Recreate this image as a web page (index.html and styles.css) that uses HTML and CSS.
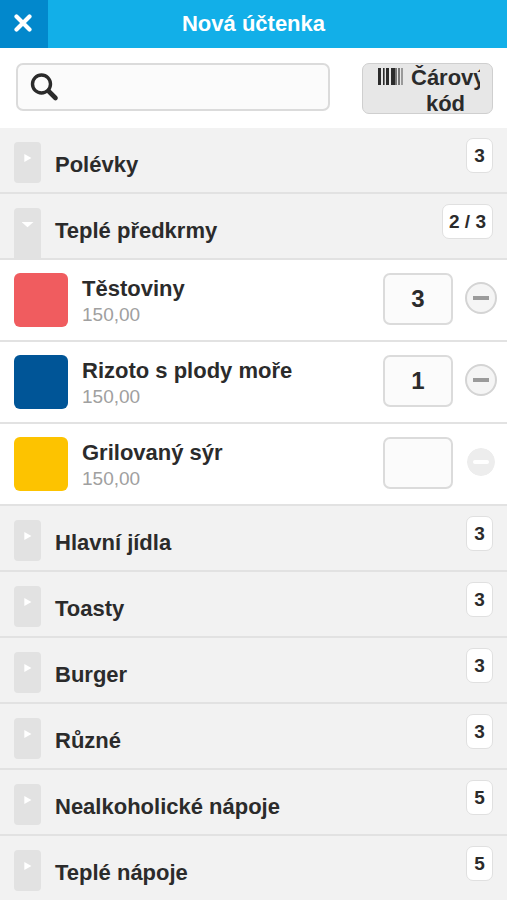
FILE: index.html
```html
<!DOCTYPE html>
<html lang="cs">
<head>
<meta charset="utf-8">
<meta name="viewport" content="width=device-width, initial-scale=1">
<title>Nová účtenka</title>
<link rel="stylesheet" href="styles.css">
</head>
<body>
<header class="topbar">
  <button class="close" type="button" aria-label="Zavřít">
    <svg width="20" height="20" viewBox="0 0 20 20" aria-hidden="true"><path d="M2.500 2.500 15.500 15.500M15.500 2.500 2.500 15.500" stroke="#fff" stroke-width="4.200" stroke-linecap="round"/></svg>
  </button>
  <h1 class="title">Nová účtenka</h1>
</header>
<main>
  <div class="tools">
    <label class="search">
      <svg width="30" height="30" viewBox="0 0 30 30" aria-hidden="true"><circle cx="11.500" cy="12" r="9" fill="none" stroke="#2b2b2b" stroke-width="3.400"/><path d="M18.500 19 25.500 26" stroke="#2b2b2b" stroke-width="4.600" stroke-linecap="round"/></svg>
      <input type="search" aria-label="Hledat">
    </label>
    <button class="barcode" type="button">
      <svg width="25" height="17" viewBox="0 0 25 17" aria-hidden="true"><path fill="#2b2b2b" d="M0 0h3v17H0zM5 0h1v17H5zM8 0h3v17H8zM13 0h4v17h-4z"/><path fill="#777" d="M6 0h1v17H6zM17 0h2v17h-2zM20 0h2v17h-2z"/><path fill="#999" d="M23 0h2v17h-2z"/></svg>
      <span class="barcode-text">Čárový kód</span>
    </button>
  </div>

  <button class="category" type="button" aria-expanded="false"><span class="toggle"></span><span class="name">Polévky</span><span class="count">3</span></button>
  <button class="category" type="button" aria-expanded="true"><span class="toggle"></span><span class="name">Teplé předkrmy</span><span class="count">2 / 3</span></button>

  <ul class="items">
    <li class="item">
      <span class="swatch red"></span>
      <div class="info"><label class="product" for="q1">Těstoviny</label><span class="price">150,00</span></div>
      <input class="qty" id="q1" type="text" inputmode="numeric" value="3">
      <button class="minus" type="button" aria-label="Ubrat Těstoviny"></button>
    </li>
    <li class="item">
      <span class="swatch blue"></span>
      <div class="info"><label class="product" for="q2">Rizoto s plody moře</label><span class="price">150,00</span></div>
      <input class="qty" id="q2" type="text" inputmode="numeric" value="1">
      <button class="minus" type="button" aria-label="Ubrat Rizoto s plody moře"></button>
    </li>
    <li class="item">
      <span class="swatch yellow"></span>
      <div class="info"><label class="product" for="q3">Grilovaný sýr</label><span class="price">150,00</span></div>
      <input class="qty" id="q3" type="text" inputmode="numeric" value="">
      <button class="minus" type="button" aria-label="Ubrat Grilovaný sýr" disabled></button>
    </li>
  </ul>

  <button class="category" type="button" aria-expanded="false"><span class="toggle"></span><span class="name">Hlavní jídla</span><span class="count">3</span></button>
  <button class="category" type="button" aria-expanded="false"><span class="toggle"></span><span class="name">Toasty</span><span class="count">3</span></button>
  <button class="category" type="button" aria-expanded="false"><span class="toggle"></span><span class="name">Burger</span><span class="count">3</span></button>
  <button class="category" type="button" aria-expanded="false"><span class="toggle"></span><span class="name">Různé</span><span class="count">3</span></button>
  <button class="category" type="button" aria-expanded="false"><span class="toggle"></span><span class="name">Nealkoholické nápoje</span><span class="count">5</span></button>
  <button class="category" type="button" aria-expanded="false"><span class="toggle"></span><span class="name">Teplé nápoje</span><span class="count">5</span></button>
</main>
</body>
</html>
```
FILE: styles.css
```css
* {
  box-sizing: border-box;
}

body {
  margin: 0;
  background: #fff;
  color: #2b2b2b;
  font-family: "Liberation Sans", Arial, sans-serif;
  font-size: 22px;
  line-height: 26px;
}

button,
input {
  margin: 0;
  padding: 0;
  border: 0;
  color: inherit;
  font: inherit;
}

main {
  height: calc(100vh - 48px);
  overflow: hidden;
}

.topbar {
  display: grid;
  grid-template-columns: 48px 1fr 48px;
  align-items: center;
  height: 48px;
  background: #12afe8;
  color: #fff;
}

.close {
  display: flex;
  align-items: center;
  justify-content: center;
  height: 48px;
  background: #0288cc;
}

.title {
  margin: 0;
  font-size: 22px;
  font-weight: bold;
  text-align: center;
}

.tools {
  display: flex;
  gap: 32px;
  height: 80px;
  padding: 15px 14px 0 16px;
}

.search {
  display: flex;
  flex: 1;
  align-items: center;
  gap: 8px;
  min-width: 0;
  height: 48px;
  padding: 0 12px;
  border: 2px solid #dbdbdb;
  border-radius: 7px;
  background: #fbfbfb;
}

.search svg {
  flex: none;
}

.search input {
  flex: 1;
  min-width: 0;
  background: transparent;
  outline: 0;
}

.barcode {
  display: flex;
  flex: none;
  align-items: flex-start;
  gap: 8px;
  width: 131px;
  height: 51px;
  padding: 0 12px 0 15px;
  border: 1px solid #cfcfcf;
  border-radius: 7px;
  background: #e7e7e7;
  font-weight: bold;
  overflow: hidden;
}

.barcode svg {
  flex: none;
  margin-top: 4px;
}

.barcode-text {
  flex: 1;
  min-width: 0;
  padding-top: 1px;
  overflow: hidden;
  text-align: center;
}

.category {
  display: flex;
  align-items: flex-start;
  width: 100%;
  height: 66px;
  padding: 0 14px;
  border-bottom: 2px solid #e2e2e2;
  background: #f2f2f2;
  font-weight: bold;
  text-align: left;
}

.toggle {
  display: flex;
  justify-content: center;
  width: 27px;
  height: 41px;
  margin-top: 14px;
  padding-top: 12px;
  border-radius: 4px;
  background: #e2e2e2;
}

.toggle::before {
  content: "";
  width: 8px;
  height: 8px;
  background: #fff;
  clip-path: polygon(10% 0, 100% 50%, 10% 100%);
}

.category[aria-expanded="true"] .toggle {
  height: 50px;
  border-radius: 4px 4px 0 0;
}

.category[aria-expanded="true"] .toggle::before {
  width: 12px;
  height: 8px;
  clip-path: polygon(0 25%, 100% 25%, 50% 90%);
}

.name {
  flex: 1;
  margin: 24px 14px 0;
}

.count {
  min-width: 27px;
  height: 35px;
  margin-top: 10px;
  padding: 0 6px;
  border: 1px solid #e0e0e0;
  border-radius: 7px;
  background: #fff;
  font-size: 19px;
  line-height: 34px;
  text-align: center;
}

.items {
  margin: 0;
  padding: 0;
  list-style: none;
}

.item {
  display: flex;
  align-items: flex-start;
  height: 82px;
  padding: 13px 10px 0 14px;
  border-bottom: 2px solid #e2e2e2;
}

.swatch {
  width: 54px;
  height: 54px;
  border-radius: 6px;
}

.red {
  background: #f05c5f;
}

.blue {
  background: #005597;
}

.yellow {
  background: #fdc300;
}

.info {
  display: flex;
  flex: 1;
  flex-direction: column;
  margin: 3px 14px 0;
}

.product {
  font-weight: bold;
}

.price {
  color: #a0a0a0;
  font-size: 19px;
}

.qty {
  width: 70px;
  height: 52px;
  border: 2px solid #dbdbdb;
  border-radius: 7px;
  background: #fbfbfb;
  font-size: 24px;
  font-weight: bold;
  text-align: center;
}

.minus {
  display: flex;
  align-items: center;
  justify-content: center;
  width: 32px;
  height: 32px;
  margin: 9px 0 0 12px;
  border: 2px solid #d4d4d4;
  border-radius: 50%;
  background: #f5f5f5;
}

.minus::before {
  content: "";
  width: 16px;
  height: 4px;
  background: #9b9b9b;
}

.minus:disabled {
  border-color: #fff;
  background: #ededed;
  background-clip: padding-box;
}

.minus:disabled::before {
  border-radius: 2px;
  background: #fff;
}
```
